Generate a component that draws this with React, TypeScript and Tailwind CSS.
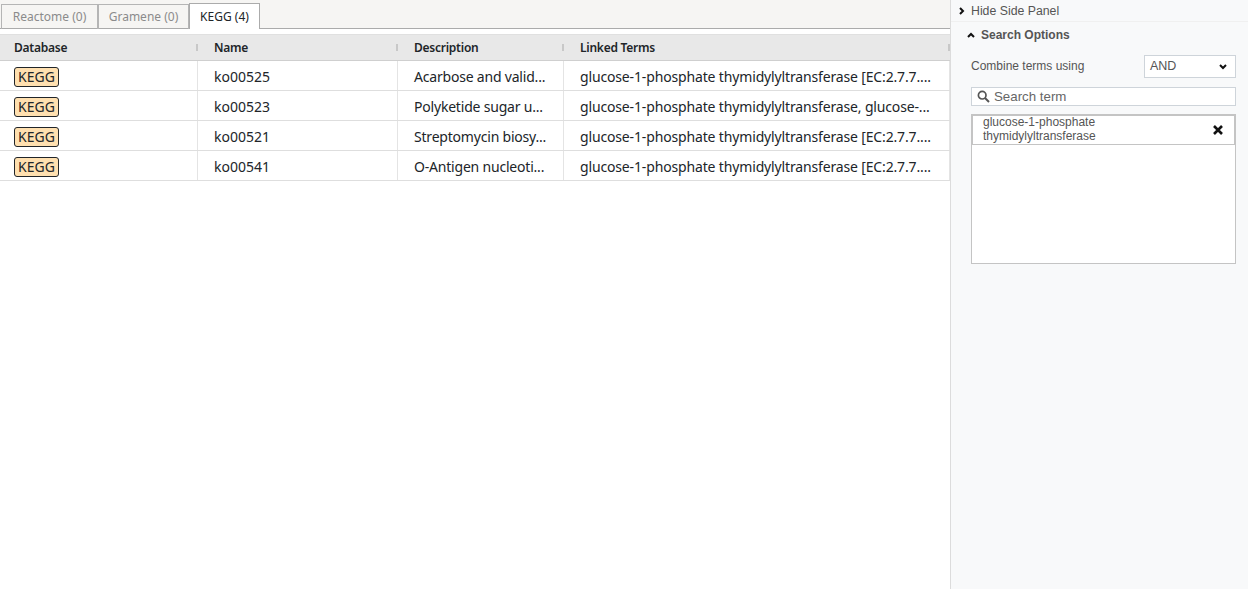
const rows = [
  ["ko00525", "Acarbose and valid...", "glucose-1-phosphate thymidylyltransferase [EC:2.7.7...."],
  ["ko00523", "Polyketide sugar u...", "glucose-1-phosphate thymidylyltransferase, glucose-..."],
  ["ko00521", "Streptomycin biosy...", "glucose-1-phosphate thymidylyltransferase [EC:2.7.7...."],
  ["ko00541", "O-Antigen nucleoti...", "glucose-1-phosphate thymidylyltransferase [EC:2.7.7...."],
];
const plex = "font-['Noto_Sans',sans-serif]";
const lib = "font-['Liberation_Sans',sans-serif]";

function Head({ w, label, pl, handle = true }: { w: string; label: string; pl: string; handle?: boolean }) {
  return (
    <div className={`${w} ${pl} flex items-center justify-between pr-0 shrink-0`}>
      <span className="text-[12px] font-semibold text-[#212529] tracking-[-0.25px]">{label}</span>
      {handle && <span className="w-[2px] h-[7px] bg-[#c8c8c8]" />}
    </div>
  );
}

function Chevron({ up }: { up?: boolean }) {
  return (
    <svg width="8" height="6" viewBox="0 0 8 6" className={up ? "" : "rotate-180"}>
      <path d="M1 5L4 2L7 5" fill="none" stroke="#111" strokeWidth="2" />
    </svg>
  );
}

export default function App() {
  return (
    <div className={`w-[1248px] h-[589px] flex overflow-hidden bg-white ${plex}`}>
      <div className="w-[950px] shrink-0 flex flex-col">
        <div className="h-[29px] bg-[#f6f5f3] border-b border-[#ababab] flex items-end pl-px shrink-0">
          <div className="h-[25px] -mb-px w-[97px] flex items-center justify-center border border-b-0 border-[#b5b5b5] text-[12px] text-[#8b8b8b]">Reactome (0)</div>
          <div className="h-[25px] -mb-px w-[91px] flex items-center justify-center border border-b-0 border-[#b5b5b5] text-[12px] text-[#8b8b8b]">Gramene (0)</div>
          <div className="h-[26px] -mb-px w-[71px] flex items-center justify-center border border-b-0 border-[#ababab] bg-white text-[12px] text-[#212529]">KEGG (4)</div>
        </div>
        <div className="h-[5px] shrink-0 bg-white" />
        <div className="h-[27px] shrink-0 bg-[#e8e8e8] border-t border-[#e0e0e0] border-b border-b-[#cfcfcf] flex">
          <Head w="w-[198px]" pl="pl-[14px]" label="Database" />
          <Head w="w-[200px]" pl="pl-[16px]" label="Name" />
          <Head w="w-[166px]" pl="pl-[16px]" label="Description" />
          <Head w="w-[386px]" pl="pl-[16px]" label="Linked Terms" />
        </div>
        {rows.map((r) => (
          <div key={r[0]} className="h-[30px] shrink-0 border-b border-[#dedede] flex items-center text-[14px] text-[#212529]">
            <div className="w-[198px] h-[29px] pl-[14px] pt-[3px] flex items-center border-r border-[#e4e4e4] shrink-0">
              <span className="h-[20px] w-[45px] flex items-center justify-center bg-[#ffe0b0] border border-[#212529] rounded-[3px] text-[14px] leading-none">KEGG</span>
            </div>
            <div className="w-[200px] h-[29px] pl-[16px] pt-[1px] flex items-center border-r border-[#e4e4e4] shrink-0">{r[0]}</div>
            <div className="w-[166px] h-[29px] pl-[16px] pt-[1px] flex items-center border-r border-[#e4e4e4] shrink-0 whitespace-nowrap tracking-[-0.2px]">{r[1]}</div>
            <div className="w-[386px] h-[29px] pl-[16px] pt-[1px] flex items-center border-r border-[#e4e4e4] shrink-0 whitespace-nowrap tracking-[-0.15px]">{r[2]}</div>
          </div>
        ))}
      </div>
      <div className={`flex-1 bg-[#f8f9fa] border-l border-[#dcdcdc] flex flex-col ${lib}`}>
        <div className="h-[22px] shrink-0 border-b border-[#f0f0f0] flex items-center pl-[7px] gap-[5px] text-[#555]">
          <span className="rotate-90 flex"><Chevron up /></span>
          <span className="text-[12.3px] pt-[2px]">Hide Side Panel</span>
        </div>
        <div className="h-[25px] shrink-0 flex items-center pl-[16px] gap-[5px]">
          <Chevron up />
          <span className="text-[12px] font-bold text-[#555] pl-px">Search Options</span>
        </div>
        <div className="pl-[20px] pr-[12px] flex flex-col">
          <div className="flex items-center justify-between mt-[8px] h-[23px]">
            <span className="text-[12px] text-[#555] -translate-y-px">Combine terms using</span>
            <div className="w-[92px] h-[23px] bg-white border border-[#ced4da] flex items-center justify-between pl-[5px] pr-[8px] text-[12.5px] text-[#555]">
              AND
              <Chevron />
            </div>
          </div>
          <div className="mt-[9px] h-[19px] bg-white border border-[#ced4da] flex items-center pl-[5px] gap-[4px]">
            <svg width="13" height="13" viewBox="0 0 13 13">
              <circle cx="5.2" cy="5.2" r="3.8" fill="none" stroke="#555" strokeWidth="1.7" />
              <path d="M8 8L12 12" stroke="#555" strokeWidth="2" />
            </svg>
            <span className="text-[13.3px] text-[#666]">Search term</span>
          </div>
          <div className="mt-[8px] h-[150px] bg-white border border-[#c4c4c4]">
            <div className="h-[31px] border-2 border-b border-[#c4c4c4] flex items-center justify-between pl-[10px] pr-[10px] -mt-px -mx-px">
              <span className="text-[12px] leading-[14px] text-[#555] -translate-y-px">glucose-1-phosphate<br />thymidylyltransferase</span>
              <svg width="10" height="10" viewBox="0 0 10 10" className="mr-[1px]">
                <path d="M1 1L9 9M9 1L1 9" stroke="#111" strokeWidth="2.6" />
              </svg>
            </div>
          </div>
        </div>
      </div>
    </div>
  );
}
